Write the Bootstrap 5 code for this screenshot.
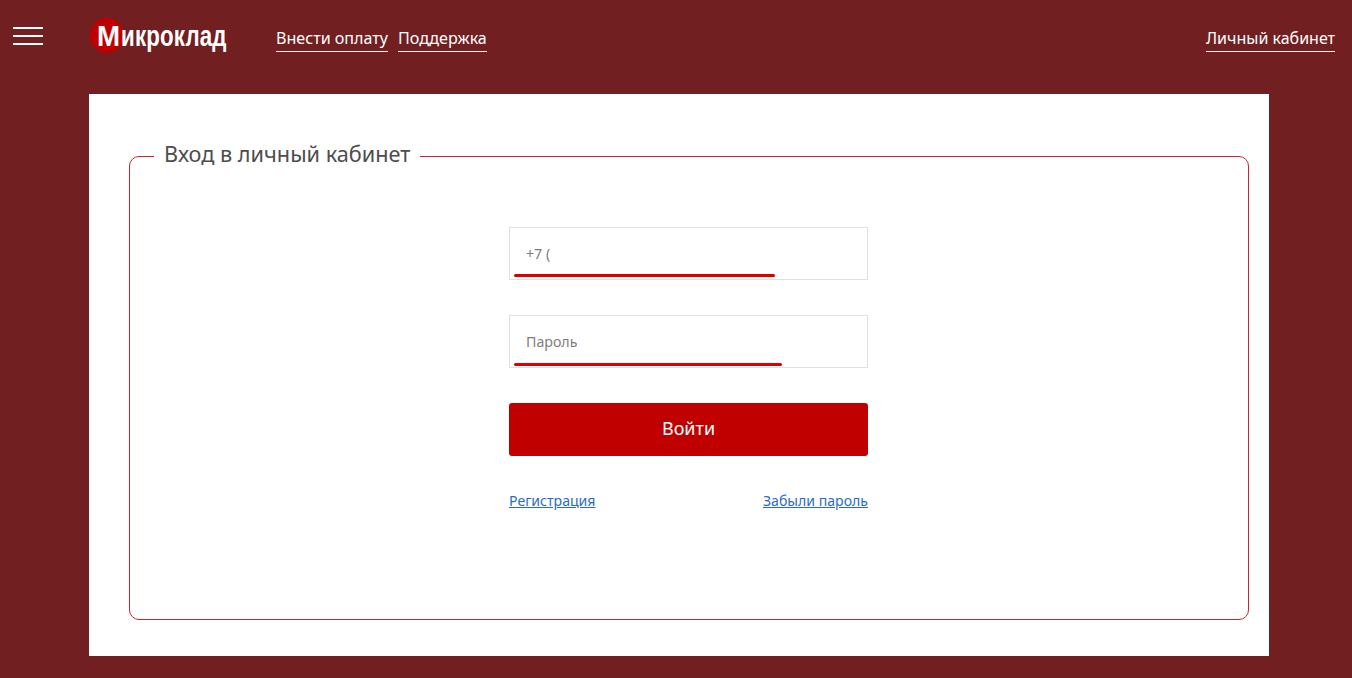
<!DOCTYPE html>
<html lang="ru">
<head>
  <meta charset="UTF-8" />
  <meta name="viewport" content="width=device-width, initial-scale=1" />
  <title>Микроклад</title>
  <link href="https://cdn.jsdelivr.net/npm/bootstrap@5.3.0/dist/css/bootstrap.min.css" rel="stylesheet" />
  <style>
    body { background: #721f22; font-family: "Noto Sans", sans-serif; color: #4d4d4d; height: 678px; overflow: hidden; }
    .top-bar { height: 94px; padding-top: 26px; padding-left: 13px; padding-right: 17px; }
    .burger { width: 30px; height: 18px; margin-top: 1px; margin-right: 46px; border-top: 2px solid #fff; border-bottom: 2px solid #fff; position: relative; }
    .burger::after { content: ""; position: absolute; left: 0; right: 0; top: 6px; height: 2px; background: #fff; }
    .brand { width: 187px; height: 40px; margin-top: -8px; position: relative; color: #fff; text-decoration: none; font-family: "Liberation Sans", sans-serif; font-weight: 700; font-size: 29px; line-height: 36px; padding-left: 8px; }
    .brand-dot { position: absolute; left: 1px; top: 0; width: 34px; height: 35px; border-radius: 50%; background: #c00000; }
    .brand-text { position: relative; display: inline-block; transform: scaleX(0.77); transform-origin: left center; white-space: nowrap; }
    .brand-cap { display: inline-block; transform: scaleX(1.24); transform-origin: left center; margin-right: 7px; }
    .brand-rest { letter-spacing: 0.2px; }
    .top-link { color: #fff; text-decoration: none; font-size: 16.1px; line-height: 24px; border-bottom: 1px solid #fff; padding-bottom: 1px; margin-right: 10px; }
    .top-link.last { margin-right: 0; font-size: 16px; }
    .panel-white { background: #fff; width: 1180px; height: 562px; margin-left: 89px; padding: 48px 20px 0 40px; }
    .login-box { border: 1px solid #c4272d; border-radius: 10px; height: 478px; margin: 0; padding: 0; min-width: 0; }
    .login-box legend { float: none; width: auto; margin: 0 0 0 24px; padding: 0 10px 4px; font-size: 21.7px; line-height: 24px; color: #4d4d4d; }
    .login-form { width: 359px; margin: 57px 0 0 379px; }
    .phone-wrap { position: relative; margin-bottom: 35px; }
    .phone-wrap .form-control { height: 53px; border: 1px solid #e1e1e1; border-radius: 0; padding: 0 16px; font-size: 14.2px; color: #6f6f6f; }
    .phone-wrap .form-control::placeholder { color: #7d7d80; opacity: 1; }
    .red-line { position: absolute; left: 5px; height: 3px; background: #dc0000; border-radius: 2px; }
    .line-one { width: 261px; top: 47px; }
    .line-two { width: 268px; top: 48px; }
    .btn-enter { height: 53px; background: #c00000; border: 0; border-radius: 3px; color: #fff; font-size: 18px; padding-bottom: 8px; }
    .btn-enter:hover { background: #a80000; color: #fff; }
    .form-links { margin-top: 34px; font-size: 14.1px; line-height: 21px; }
    .form-links a { color: #2a6bc9; }
  </style>
</head>
<body>
  <div class="top-bar d-flex align-items-start">
    <div class="burger"></div>
    <a class="brand d-block" href="#"><span class="brand-dot"></span><span class="brand-text"><span class="brand-cap">М</span><span class="brand-rest">икроклад</span></span></a>
    <a class="top-link" href="#">Внести оплату</a>
    <a class="top-link" href="#">Поддержка</a>
    <a class="top-link last ms-auto" href="#">Личный кабинет</a>
  </div>

  <div class="panel-white">
    <fieldset class="login-box">
      <legend>Вход в личный кабинет</legend>
      <form class="login-form">
        <div class="phone-wrap">
          <input class="form-control" type="text" placeholder="+7 (" />
          <div class="red-line line-one"></div>
        </div>
        <div class="phone-wrap">
          <input class="form-control" type="password" placeholder="Пароль" />
          <div class="red-line line-two"></div>
        </div>
        <button class="btn btn-enter w-100" type="button">Войти</button>
        <div class="form-links d-flex justify-content-between">
          <a href="#">Регистрация</a>
          <a href="#">Забыли пароль</a>
        </div>
      </form>
    </fieldset>
  </div>

<script src="https://cdn.jsdelivr.net/npm/bootstrap@5.3.0/dist/js/bootstrap.bundle.min.js"></script>
</body>
</html>
